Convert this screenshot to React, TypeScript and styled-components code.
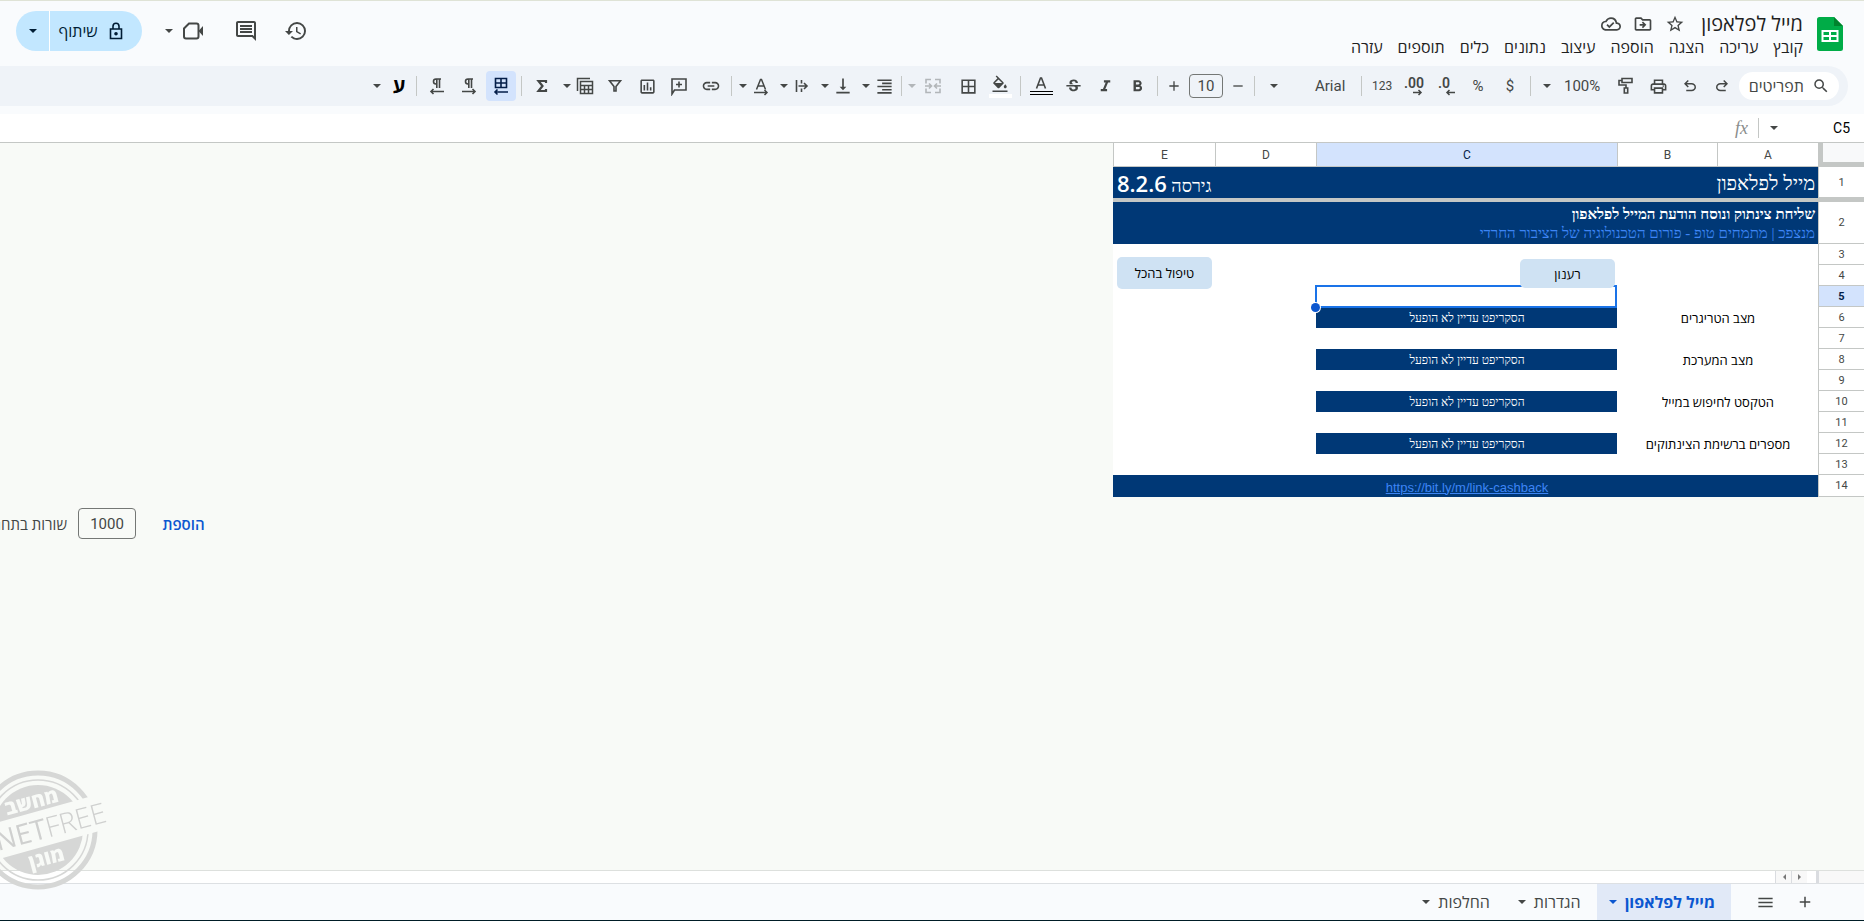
import React from "react";
import styled, { createGlobalStyle, css } from "styled-components";
import {
  MdAdd,
  MdBorderAll,
  MdFormatAlignRight,
  MdFormatBold,
  MdFormatColorFill,
  MdFormatItalic,
  MdHistory,
  MdLink,
  MdMenu,
  MdOutlineCloudDone,
  MdOutlineComment,
  MdOutlineDriveFileMove,
  MdOutlineInsertChart,
  MdOutlinePrint,
  MdRemove,
  MdSearch,
  MdStarOutline,
  MdStrikethroughS,
  MdVerticalAlignBottom,
} from "react-icons/md";

const ui = `"Open Sans", "Liberation Sans", sans-serif`;
const latin = `Roboto, "Liberation Sans", sans-serif`;
const serif = `"Liberation Serif", serif`;
const ink = "#444746";
const navy = "#003876";
const line = "#c4c7c5";

const GlobalStyle = createGlobalStyle`
  * { box-sizing: border-box; }
  body { margin: 0; background: #f9fbfd; font-family: ${ui}; overflow: hidden; }
  button, input { font: inherit; color: inherit; border: 0; background: none; padding: 0; margin: 0; outline: 0; }
  svg { display: block; flex: none; }
`;

const Page = styled.div`
  height: 100vh;
  display: flex;
  flex-direction: column;
  overflow: hidden;
  color: ${ink};
  border-top: 1px solid #dfe3d6;
  border-bottom: 1px solid #001d26;
`;

/* ---------- header ---------- */

const Header = styled.header`
  height: 65px;
  flex: none;
  display: flex;
  align-items: flex-start;
  padding: 10px 21px 0 16px;
`;

const Logo = styled.svg`
  margin-top: 6px;
`;

const Titles = styled.div`
  flex: 1;
  margin-right: 14px;
`;

const TitleRow = styled.div`
  display: flex;
  align-items: center;
  height: 26px;
  gap: 12px;
`;

const Title = styled.h1`
  margin: 0 0 0 4px;
  font-size: 20px;
  line-height: 26px;
  font-weight: 400;
  color: #1f1f1f;
`;

const PlainButton = styled.button`
  display: flex;
  align-items: center;
  justify-content: center;
`;

const Menus = styled.nav`
  display: flex;
  gap: 15px;
  height: 20px;
`;

const MenuButton = styled.button`
  font-size: 16px;
  line-height: 20px;
  color: #1f1f1f;
`;

const HeaderActions = styled.div`
  display: flex;
  align-items: center;
  height: 40px;
`;

const HeaderButton = styled(PlainButton)<{ $after: number }>`
  margin-left: ${(p) => p.$after}px;
`;

const Share = styled.div`
  display: flex;
  height: 40px;
  border-radius: 20px;
  overflow: hidden;
  background: #c2e7ff;
  color: #001d35;
`;

const ShareMain = styled(PlainButton)`
  width: 93px;
  gap: 8px;
  padding-right: 8px;
  font-size: 16px;
  font-weight: 500;
  border-left: 1px solid #fff;
`;

const ShareMore = styled(PlainButton)`
  width: 33px;
`;

/* ---------- toolbar ---------- */

const Toolbar = styled.div`
  height: 40px;
  flex: none;
  display: flex;
  align-items: center;
  margin-right: 16px;
  padding-right: 9px;
  border-radius: 0 20px 20px 0;
  background: #eff3f8;
`;

const SearchPill = styled.label`
  display: flex;
  align-items: center;
  gap: 8px;
  width: 100px;
  height: 28px;
  padding-right: 9px;
  margin-left: 1px;
  border-radius: 14px;
  background: #fff;
`;

const SearchInput = styled.input`
  width: 60px;
  font-size: 16px;
  line-height: 20px;
  &::placeholder { color: ${ink}; opacity: 1; }
`;

const Tool = styled(PlainButton)<{ $active?: boolean; $size?: number }>`
  width: 32px;
  height: 30px;
  font: 400 ${(p) => p.$size ?? 15}px ${latin};
  ${(p) =>
    p.$active &&
    css`
      width: 30px;
      margin: 0 1px;
      border-radius: 4px;
      background: #d3e3fd;
      color: #041e49;
    `}
`;

const Split = styled(PlainButton)<{ $start?: number; $gap?: number; $end?: number; $dim?: boolean }>`
  flex: none;
  height: 30px;
  padding: 0 ${(p) => p.$start ?? 1}px 0 ${(p) => p.$end ?? 2}px;
  gap: ${(p) => p.$gap ?? 1}px;
  opacity: ${(p) => (p.$dim ? 0.35 : 1)};
  & + & { margin-right: 3px; }
`;

const SplitIcon = styled.span`
  width: 24px;
  display: flex;
  justify-content: center;
  font: 700 20px/24px ${ui};
  color: ${ink};
`;

const Letter = styled(SplitIcon)`
  color: #000;
`;

const Divider = styled.span`
  width: 1px;
  height: 20px;
  margin: 0 4px;
  background: ${line};
`;

const Picker = styled(PlainButton)<{ $width: number; $gap: number; $size: number; $end: number }>`
  width: ${(p) => p.$width}px;
  height: 30px;
  gap: ${(p) => p.$gap}px;
  justify-content: flex-end;
  padding-left: ${(p) => p.$end}px;
  font: 400 ${(p) => p.$size}px ${latin};
`;

const SizeGroup = styled.div`
  display: flex;
  align-items: center;
  gap: 3px;
`;

const StepButton = styled(PlainButton)`
  width: 24px;
  height: 24px;
`;

const SizeInput = styled.input`
  width: 34px;
  height: 24px;
  border: 1px solid #747775;
  border-radius: 4px;
  text-align: center;
  font: 400 15px ${latin};
`;

const ColorTool = styled(PlainButton)`
  width: 32px;
  height: 30px;
  flex-direction: column;
  gap: 2px;
`;

const Swatch = styled.span<{ $double?: boolean }>`
  width: 23px;
  height: 4px;
  background: #fff;
  ${(p) =>
    p.$double &&
    css`
      background: none;
      border-top: 1px solid #000;
      border-bottom: 1px solid #000;
    `}
`;

/* ---------- formula bar ---------- */

const FormulaBar = styled.div`
  height: 29px;
  flex: none;
  display: flex;
  align-items: center;
  gap: 6px;
  margin-top: 8px;
  padding-right: 14px;
  background: #fff;
  border-bottom: 1px solid ${line};
`;

const NameBox = styled.input`
  width: 65px;
  direction: ltr;
  text-align: right;
  font: 400 14px ${latin};
  color: #000;
`;

const Fx = styled.span`
  font: italic 400 18px/20px ${serif};
  color: #8a8d8c;
`;

const FormulaInput = styled.input`
  flex: 1;
  height: 28px;
`;

/* ---------- sheet ---------- */

const SheetArea = styled.main`
  flex: 1;
  min-height: 0;
  overflow: hidden;
  background: #f8faf7;
`;

const GridBox = styled.div`
  position: relative;
  width: 751px;
`;

const Grid = styled.table`
  width: 100%;
  table-layout: fixed;
  border-collapse: separate;
  border-spacing: 0;
  background: #fff;
`;

const ColHead = styled.th<{ $on?: boolean }>`
  height: 24px;
  padding: 0;
  border-left: 1px solid ${line};
  border-bottom: 1px solid ${line};
  background: ${(p) => (p.$on ? "#d3e3fd" : "#fff")};
  font: 400 12px ${latin};
  color: ${(p) => (p.$on ? "#041e49" : ink)};
`;

const Corner = styled.td`
  padding: 0;
  background: #f8f9fa;
  border-left: 5px solid ${line};
  border-bottom: 5px solid ${line};
`;

const RowHead = styled.th<{ $on?: boolean }>`
  padding: 0;
  border-left: 1px solid ${line};
  border-bottom: 1px solid ${line};
  background: ${(p) => (p.$on ? "#d3e3fd" : "#fff")};
  font: ${(p) => (p.$on ? 700 : 400)} 11px ${latin};
  color: ${(p) => (p.$on ? "#041e49" : ink)};
`;

const Row = styled.tr<{ $h?: number }>`
  height: ${(p) => p.$h ?? 21}px;
`;

const FreezeBar = styled.td`
  height: 4px;
  padding: 0;
  background: ${line};
`;

const Cell = styled.td<{ $fill?: boolean; $size?: number; $align?: string }>`
  padding: 2px 3px 0 4px;
  text-align: ${(p) => p.$align ?? "center"};
  white-space: nowrap;
  font: 400 ${(p) => p.$size ?? 13}px/19px ${(p) => (p.$fill ? serif : ui)};
  color: ${(p) => (p.$fill ? "#fff" : "#000")};
  background: ${(p) => (p.$fill ? navy : "#fff")};
`;

const Version = styled.span`
  font: 600 22px/24px ${ui};
`;

const Strong = styled.span`
  font-weight: 700;
`;

const ForumLink = styled.a`
  color: #3d85f5;
  text-decoration: none;
`;

const UrlLink = styled.a`
  font: 400 13px ${`"Liberation Sans", sans-serif`};
  color: #3d85f5;
`;

const SelectedCell = styled.td`
  position: relative;
  padding: 0;
`;

const Selection = styled.span`
  position: absolute;
  inset: -1px 0 -1px -1px;
  border: 2px solid #1a73e8;
  &::after {
    content: "";
    position: absolute;
    left: -6px;
    bottom: -6px;
    width: 9px;
    height: 9px;
    border-radius: 50%;
    background: #0b57d0;
    box-shadow: 0 0 0 1px #fff;
  }
`;

const SheetButton = styled.button<{ $top: number; $right: number; $h: number }>`
  position: absolute;
  top: ${(p) => p.$top}px;
  right: ${(p) => p.$right}px;
  width: 95px;
  height: ${(p) => p.$h}px;
  border-radius: 5px;
  background: #cfe2f3;
  color: #000;
  font-size: 13px;
`;

const AddRows = styled.form`
  width: 205px;
  margin: 11px auto 0 0;
  display: flex;
  align-items: center;
  white-space: nowrap;
  font-size: 15px;
`;

const AddButton = styled.button`
  flex: none;
  width: 43px;
  margin-left: 26px;
  font-weight: 600;
  color: #0b57d0;
`;

const CountInput = styled.input`
  flex: none;
  width: 58px;
  height: 31px;
  margin-left: 11px;
  border: 1px solid #747775;
  border-radius: 4px;
  text-align: center;
  font: 400 15px ${latin};
`;

/* ---------- bottom ---------- */

const ScrollStrip = styled.div`
  height: 14px;
  flex: none;
  display: flex;
  background: #fff;
  border-top: 1px solid #dde0dd;
  border-bottom: 1px solid #dde0e3;
`;

const ScrollEnd = styled.span`
  width: 48px;
  margin-left: 9px;
  background: #f8f8f8;
  border-left: 3px solid #dadce0;
`;

const ScrollButton = styled(PlainButton)`
  width: 16px;
  border-left: 1px solid #dadce0;
  background: #f8f8f8;
`;

const Footer = styled.footer`
  height: 36px;
  flex: none;
  display: flex;
  align-items: center;
  padding-right: 49px;
`;

const FootButton = styled(PlainButton)<{ $after: number }>`
  width: 20px;
  margin-left: ${(p) => p.$after}px;
`;

const SheetTab = styled.button<{ $active?: boolean }>`
  display: flex;
  align-items: center;
  justify-content: center;
  gap: 7px;
  height: 36px;
  padding: 0 16px 0 11px;
  font-size: 16px;
  font-weight: ${(p) => (p.$active ? 700 : 500)};
  color: ${(p) => (p.$active ? "#0b57d0" : ink)};
  background: ${(p) => (p.$active ? "#e1e9f7" : "none")};
`;

const Stamp = styled.svg`
  position: fixed;
  left: 0;
  bottom: 26px;
  pointer-events: none;
`;

/* ---------- icons ---------- */

const Caret = () => (
  <svg width="10" height="6" viewBox="0 0 10 6" fill="currentColor" aria-hidden>
    <path d="M1 1h8L5 5z" />
  </svg>
);

const Icon = ({ children, size = 20 }: { children: React.ReactNode; size?: number }) => (
  <svg width={size} height={size} viewBox="0 0 20 20" fill="none" stroke="currentColor" strokeWidth="1.6" aria-hidden>
    {children}
  </svg>
);

const undoPath =
  "M280-200v-80h284q63 0 109.5-40T720-420q0-60-46.5-100T564-560H312l104 104-56 56-200-200 200-200 56 56-104 104h252q97 0 166.5 63T800-420q0 94-69.5 157T564-200H280Z";

const Undo = () => (
  <svg width="18" height="18" viewBox="0 -960 960 960" fill="currentColor" aria-hidden>
    <path d={undoPath} />
  </svg>
);

const Redo = () => (
  <svg width="18" height="18" viewBox="0 -960 960 960" fill="currentColor" aria-hidden>
    <path transform="matrix(-1 0 0 1 960 0)" d={undoPath} />
  </svg>
);

const Roller = () => (
  <Icon>
    <path d="M6 2.500h10v4H6zM6 4.500H3v4.500h7v3M8.300 12h3.400v5H8.300z" />
  </Icon>
);

const Decimal = ({ label, more }: { label: string; more?: boolean }) => (
  <svg width="22" height="22" viewBox="0 0 22 22" aria-hidden>
    <text x={more ? 1 : 3} y="13" fontFamily="Roboto, sans-serif" fontWeight="600" fontSize="14" fill="currentColor" direction="ltr">
      {label}
    </text>
    <path
      d={more ? "M10 17.500h8M15.500 15l2.500 2.500-2.500 2.500" : "M20 17.500h-8M14.500 15L12 17.500l2.500 2.500"}
      fill="none"
      stroke="currentColor"
      strokeWidth="1.500"
    />
  </svg>
);

const Merge = () => (
  <Icon>
    <path d="M8 3.500H3v4M3 12.500v4h5M12 3.500h5v4M17 12.500v4h-5M2 10h6M6 7.500L8.500 10 6 12.500M18 10h-6M14 7.500L11.500 10l2.500 2.500" />
  </Icon>
);

const Wrap = () => (
  <Icon>
    <path d="M4.500 4v12M9.500 4v3.500M9.500 12.500V16M6.500 10H15M12 7l3 3-3 3" />
  </Icon>
);

const Rotate = () => (
  <Icon>
    <path d="M5.500 13.500L9.500 3.500h1l4 10M7 10h6M3 16.500h13M13.500 14l2.500 2.500-2.500 2.500" strokeWidth="1.500" />
  </Icon>
);

const AddNote = () => (
  <Icon>
    <path d="M3 18V3h14v11H5.500zM10 5.500v6M7 8.500h6" />
  </Icon>
);

const Funnel = () => (
  <Icon>
    <path d="M4.500 4.800h11L11 10.500V15H9v-4.500z" />
  </Icon>
);

const TableView = () => (
  <Icon>
    <path d="M2.500 15V2.500H15M5.500 5.500h12v12h-12zM5.500 9.500h12M5.500 13.500h12M9.500 9.500v8M13.500 9.500v8" strokeWidth="1.500" />
  </Icon>
);

const Sigma = () => (
  <Icon>
    <path d="M14 7V5H6.500l4 5-4 5H14v-2" strokeWidth="2.200" />
  </Icon>
);

const Paragraph = ({ rtl }: { rtl?: boolean }) => (
  <Icon>
    <path d="M14 3H9a2.500 2.500 0 0 0 0 5h.500M9.800 3v9M12.500 3v9" />
    <path d={rtl ? "M17 15.500H4M6.500 13L4 15.500 6.500 18" : "M3 15.500h13M13.500 13l2.500 2.500-2.500 2.500"} />
  </Icon>
);

const TableRtl = () => (
  <Icon>
    <path d="M4.500 2.500h11v9h-11zM4.500 7h11M10 2.500v9M17 16H4M6.500 13.500L4 16l2.500 2.500" />
  </Icon>
);

const Video = () => (
  <svg width="22" height="20" viewBox="0 0 22 20" aria-hidden>
    <path d="M7 2.500h7.500q2 0 2 2v11q0 2-2 2H4q-2 0-2-2V7.500z" fill="none" stroke="currentColor" strokeWidth="2" />
    <path d="M16.500 10L21 5v10z" fill="currentColor" />
  </svg>
);

const Lock = () => (
  <Icon>
    <path d="M4.500 8h11v9.500h-11zM7 8V5.200a3 3 0 0 1 6 0V8" strokeWidth="1.600" />
    <circle cx="10" cy="12.700" r="1" fill="currentColor" />
  </Icon>
);

const menus = ["קובץ", "עריכה", "הצגה", "הוספה", "עיצוב", "נתונים", "כלים", "תוספים", "עזרה"];
const pending = "הסקריפט עדיין לא הופעל";
const labels: Record<number, string> = {
  6: "מצב הטריגרים",
  8: "מצב המערכת",
  10: "הטקסט לחיפוש במייל",
  12: "מספרים ברשימת הצינתוקים",
};

const BodyRow = ({ n }: { n: number }) => {
  const label = labels[n];
  return (
    <Row>
      <RowHead scope="row" $on={n === 5}>{n}</RowHead>
      <Cell colSpan={2}>{label}</Cell>
      {n === 5 ? (
        <SelectedCell>
          <Selection />
        </SelectedCell>
      ) : (
        <Cell $fill={!!label} $size={12}>{label && pending}</Cell>
      )}
      <Cell />
      <Cell />
    </Row>
  );
};

export default function App() {
  return (
    <Page dir="rtl">
      <GlobalStyle />
      <Header>
        <Logo width="26" height="34" viewBox="0 0 26 34" aria-label="Sheets">
          <path d="M2.500 0H17l9 9v22.500a2.500 2.500 0 0 1-2.500 2.500h-21A2.500 2.500 0 0 1 0 31.500v-29A2.500 2.500 0 0 1 2.500 0z" fill="#00ac47" />
          <path d="M17 0l9 9h-9z" fill="#00832d" />
          <path d="M5.500 14h15v10h-15zM5.500 19h15M13 14v10" fill="none" stroke="#fff" strokeWidth="2" />
        </Logo>
        <Titles>
          <TitleRow>
            <Title>מייל לפלאפון</Title>
            <PlainButton aria-label="כוכב"><MdStarOutline size={20} /></PlainButton>
            <PlainButton aria-label="העברה"><MdOutlineDriveFileMove size={20} /></PlainButton>
            <PlainButton aria-label="סטטוס"><MdOutlineCloudDone size={20} /></PlainButton>
          </TitleRow>
          <Menus>
            {menus.map((m) => (
              <MenuButton key={m}>{m}</MenuButton>
            ))}
          </Menus>
        </Titles>
        <HeaderActions>
          <HeaderButton $after={26} aria-label="היסטוריה"><MdHistory size={24} /></HeaderButton>
          <HeaderButton $after={30} aria-label="תגובות"><MdOutlineComment size={24} /></HeaderButton>
          <HeaderButton $after={8} aria-label="שיחה"><Video /></HeaderButton>
          <HeaderButton $after={22} aria-label="עוד"><Caret /></HeaderButton>
          <Share>
            <ShareMain><Lock />שיתוף</ShareMain>
            <ShareMore aria-label="אפשרויות שיתוף"><Caret /></ShareMore>
          </Share>
        </HeaderActions>
      </Header>

      <Toolbar>
        <SearchPill>
          <MdSearch size={18} />
          <SearchInput placeholder="תפריטים" aria-label="תפריטים" />
        </SearchPill>
        <Tool aria-label="ביצוע מחדש"><Redo /></Tool>
        <Tool aria-label="ביטול"><Undo /></Tool>
        <Tool aria-label="הדפסה"><MdOutlinePrint size={19} /></Tool>
        <Tool aria-label="מברשת"><Roller /></Tool>
        <Picker $width={75} $gap={12} $size={15} $end={7}>100%<Caret /></Picker>
        <Divider />
        <Tool>$</Tool>
        <Tool>%</Tool>
        <Tool aria-label="פחות ספרות"><Decimal label=".0" /></Tool>
        <Tool aria-label="יותר ספרות"><Decimal label=".00" more /></Tool>
        <Tool $size={12}>123</Tool>
        <Divider />
        <Picker $width={98} $gap={36} $size={15} $end={10}>Arial<Caret /></Picker>
        <Divider />
        <SizeGroup>
          <StepButton aria-label="הקטנה"><MdRemove size={16} /></StepButton>
          <SizeInput defaultValue="10" aria-label="גודל גופן" />
          <StepButton aria-label="הגדלה"><MdAdd size={16} /></StepButton>
        </SizeGroup>
        <Divider />
        <Tool aria-label="מודגש"><MdFormatBold size={19} /></Tool>
        <Tool aria-label="נטוי"><MdFormatItalic size={19} /></Tool>
        <Tool aria-label="קו חוצה"><MdStrikethroughS size={19} /></Tool>
        <ColorTool aria-label="צבע טקסט">
          <svg width="12" height="12" viewBox="0 0 12 12" fill="none" stroke="currentColor" strokeWidth="1.600" aria-hidden>
            <path d="M1.500 11.500L5.500 1h1l4 10.500M3 8h6" />
          </svg>
          <Swatch $double />
        </ColorTool>
        <Divider />
        <ColorTool aria-label="צבע מילוי">
          <MdFormatColorFill size={18} viewBox="0 0 24 20" />
          <Swatch />
        </ColorTool>
        <Tool aria-label="גבולות"><MdBorderAll size={19} /></Tool>
        <Split $start={7} $gap={4} $end={1} $dim aria-label="מיזוג"><SplitIcon><Merge /></SplitIcon><Caret /></Split>
        <Divider />
        <Split aria-label="יישור אופקי"><SplitIcon><MdFormatAlignRight size={19} /></SplitIcon><Caret /></Split>
        <Split aria-label="יישור אנכי"><SplitIcon><MdVerticalAlignBottom size={20} /></SplitIcon><Caret /></Split>
        <Split aria-label="גלישה"><SplitIcon><Wrap /></SplitIcon><Caret /></Split>
        <Split aria-label="סיבוב"><SplitIcon><Rotate /></SplitIcon><Caret /></Split>
        <Divider />
        <Tool aria-label="קישור"><MdLink size={20} /></Tool>
        <Tool aria-label="תגובה"><AddNote /></Tool>
        <Tool aria-label="תרשים"><MdOutlineInsertChart size={19} /></Tool>
        <Tool aria-label="מסנן"><Funnel /></Tool>
        <Split $end={4} $start={2} aria-label="תצוגות"><SplitIcon><TableView /></SplitIcon><Caret /></Split>
        <Tool aria-label="פונקציות"><Sigma /></Tool>
        <Divider />
        <Tool $active aria-label="גיליון מימין לשמאל"><TableRtl /></Tool>
        <Tool aria-label="משמאל לימין"><Paragraph /></Tool>
        <Tool aria-label="מימין לשמאל"><Paragraph rtl /></Tool>
        <Divider />
        <Split $gap={5}><Letter>ע</Letter><Caret /></Split>
      </Toolbar>

      <FormulaBar>
        <NameBox defaultValue="C5" aria-label="תא" />
        <Caret />
        <Divider />
        <Fx>fx</Fx>
        <FormulaInput aria-label="נוסחה" />
      </FormulaBar>

      <SheetArea>
        <GridBox>
          <Grid>
            <colgroup>
              <col width="46" />
              <col width="101" />
              <col width="100" />
              <col width="301" />
              <col width="101" />
              <col width="102" />
            </colgroup>
            <thead>
              <tr>
                <Corner />
                <ColHead scope="col">A</ColHead>
                <ColHead scope="col">B</ColHead>
                <ColHead scope="col" $on>C</ColHead>
                <ColHead scope="col">D</ColHead>
                <ColHead scope="col">E</ColHead>
              </tr>
            </thead>
            <tbody>
              <Row $h={31}>
                <RowHead scope="row">1</RowHead>
                <Cell colSpan={3} $fill $size={20} $align="right">מייל לפלאפון</Cell>
                <Cell colSpan={2} $fill $size={18} $align="left">גירסה <Version>8.2.6</Version></Cell>
              </Row>
              <tr>
                <FreezeBar colSpan={6} />
              </tr>
              <Row $h={42}>
                <RowHead scope="row">2</RowHead>
                <Cell colSpan={5} $fill $size={15} $align="right">
                  <Strong>שליחת צינתוק ונוסח הודעת המייל לפלאפון</Strong>
                  <br />
                  <ForumLink href="#">מנצפכ | מתמחים טופ - פורום הטכנולוגיה של הציבור החרדי</ForumLink>
                </Cell>
              </Row>
              {[3, 4, 5, 6, 7, 8, 9, 10, 11, 12, 13].map((n) => (
                <BodyRow key={n} n={n} />
              ))}
              <Row $h={22}>
                <RowHead scope="row">14</RowHead>
                <Cell $fill colSpan={2} />
                <Cell $fill><UrlLink href="https://bit.ly/m/link-cashback">https://bit.ly/m/link-cashback</UrlLink></Cell>
                <Cell $fill colSpan={2} />
              </Row>
            </tbody>
          </Grid>
          <SheetButton $top={116} $right={249} $h={29}>רענון</SheetButton>
          <SheetButton $top={114} $right={652} $h={32}>טיפול בהכל</SheetButton>
        </GridBox>
        <AddRows>
          <AddButton type="button">הוספת</AddButton>
          <CountInput defaultValue="1000" aria-label="מספר שורות" />
          <span>שורות בתחתית</span>
        </AddRows>
      </SheetArea>

      <ScrollStrip>
        <ScrollEnd />
        <ScrollButton aria-label="ימינה">
          <svg width="4" height="6" viewBox="0 0 4 6" aria-hidden><path d="M0 0l3 3-3 3z" fill="#777" /></svg>
        </ScrollButton>
        <ScrollButton aria-label="שמאלה">
          <svg width="4" height="6" viewBox="0 0 4 6" aria-hidden><path d="M4 0L1 3l3 3z" fill="#777" /></svg>
        </ScrollButton>
      </ScrollStrip>

      <Footer>
        <FootButton $after={20} aria-label="הוספת גיליון"><MdAdd size={18} /></FootButton>
        <FootButton $after={24} aria-label="כל הגיליונות"><MdMenu size={19} /></FootButton>
        <SheetTab $active>מייל לפלאפון<Caret /></SheetTab>
        <SheetTab>הגדרות<Caret /></SheetTab>
        <SheetTab>החלפות<Caret /></SheetTab>
      </Footer>

      <Stamp width="110" height="126" viewBox="0 0 110 126" aria-hidden>
        <defs>
          <clipPath id="caps">
            <path d="M-30 -5H110V22L-30 61zM-30 98L110 59V130H-30z" />
          </clipPath>
        </defs>
        <g clipPath="url(#caps)" fill="none" stroke="#d6d7d6">
          <circle cx="38" cy="61" r="57" strokeWidth="5" />
          <circle cx="38" cy="61" r="50" strokeWidth="1.500" />
          <circle cx="38" cy="61" r="45" fill="#d6d7d6" stroke="none" />
        </g>
        <g transform="rotate(-15 38 61)" direction="ltr">
          <text x="39" y="39" textAnchor="middle" fontFamily="Open Sans, sans-serif" fontWeight="800" fontSize="20" fill="#f8faf7">מחשב</text>
          <text x="-6" y="71" fontFamily="Open Sans, sans-serif" fontSize="28" fontWeight="500" fill="#cfd0cf">
            NET<tspan fontWeight="300">FREE</tspan>
          </text>
          <text x="39" y="97" textAnchor="middle" fontFamily="Open Sans, sans-serif" fontWeight="800" fontSize="20" fill="#f8faf7">מוגן</text>
        </g>
      </Stamp>
    </Page>
  );
}
